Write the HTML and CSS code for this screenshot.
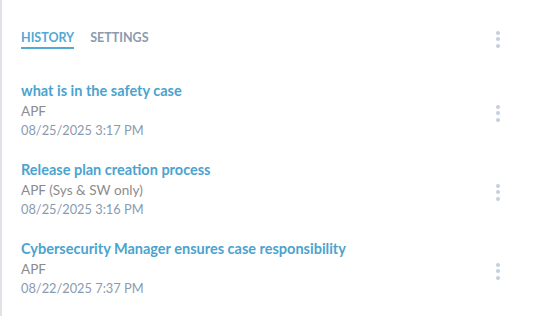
FILE: index.html
```html
<!DOCTYPE html>
<html>
<head>
<meta charset="utf-8">
<link rel="stylesheet" href="styles.css">
</head>
<body>
<div class="panel">
  <div class="tabs">
    <div class="tab-list">
      <span class="tab active">HISTORY</span>
      <span class="tab">SETTINGS</span>
    </div>
    <span class="kebab"><i></i><i></i><i></i></span>
  </div>
  <div class="items">
    <div class="item">
      <div class="text">
        <div class="title">what is in the safety case</div>
        <div class="sub">APF</div>
        <div class="date">08/25/2025 3:17 PM</div>
      </div>
      <span class="kebab"><i></i><i></i><i></i></span>
    </div>
    <div class="item">
      <div class="text">
        <div class="title">Release plan creation process</div>
        <div class="sub">APF (Sys &amp; SW only)</div>
        <div class="date">08/25/2025 3:16 PM</div>
      </div>
      <span class="kebab"><i></i><i></i><i></i></span>
    </div>
    <div class="item">
      <div class="text">
        <div class="title">Cybersecurity Manager ensures case responsibility</div>
        <div class="sub">APF</div>
        <div class="date">08/22/2025 7:37 PM</div>
      </div>
      <span class="kebab"><i></i><i></i><i></i></span>
    </div>
  </div>
</div>
</body>
</html>
```
FILE: styles.css
```css
html, body { margin: 0; padding: 0; background: #fff; }
body { font-family: "Lato", "Liberation Sans", sans-serif; }
.panel {
  width: 536px;
  height: 316px;
  box-sizing: border-box;
  border-left: 2px solid #dfe3e8;
  padding: 0 36px 0 19px;
  overflow: hidden;
}
.tabs {
  display: flex;
  align-items: center;
  justify-content: space-between;
  padding-top: 31px;
}
.tab-list { display: flex; gap: 16px; }
.tab {
  font-size: 12.5px;
  font-weight: 700;
  color: #8a9bb0;
  padding-bottom: 2px;
  border-bottom: 2px solid transparent;
  line-height: 14px;
}
.tab.active { color: #52a9d3; border-bottom-color: #52a9d3; }
.kebab { display: flex; flex-direction: column; gap: 2.4px; }
.tabs .kebab { margin-bottom: 2px; }
.kebab i { width: 4px; height: 4px; border-radius: 50%; background: #c5d0dd; display: block; }
.items { padding-top: 31px; }
.item { display: flex; justify-content: space-between; height: 79px; align-items: flex-start; }
.item .kebab { margin-top: 24px; }
.text { display: flex; flex-direction: column; }
.title { font-size: 14.5px; font-weight: 700; color: #4ba3cf; line-height: 20px; }
.sub { font-size: 13.6px; color: #8c8c8c; line-height: 20px; }
.date { font-size: 12.8px; color: #8a9bb0; line-height: 19px; }
```
